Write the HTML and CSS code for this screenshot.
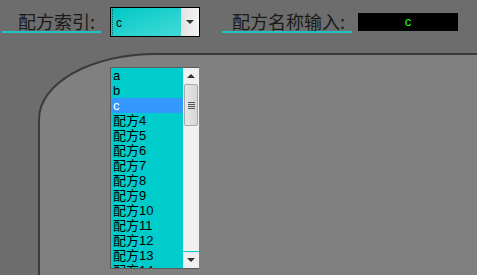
FILE: index.html
```html
<!DOCTYPE html>
<html lang="zh">
<head>
  <meta charset="UTF-8" />
  <title>配方</title>
  <link rel="stylesheet" href="styles.css">
</head>
<body>

  <div class="topbar">
    <div class="field-label label-index">配方索引:</div>
    <div class="combo">
      <span class="combo-value">c</span>
      <span class="combo-btn"><span class="tri"></span></span>
    </div>
    <div class="field-label label-name">配方名称输入:</div>
    <div class="name-box">c</div>
  </div>

  <div class="panel"></div>

  <div class="dropdown">
    <ul class="options">
      <li>a</li>
      <li>b</li>
      <li class="selected">c</li>
      <li>配方4</li>
      <li>配方5</li>
      <li>配方6</li>
      <li>配方7</li>
      <li>配方8</li>
      <li>配方9</li>
      <li>配方10</li>
      <li>配方11</li>
      <li>配方12</li>
      <li>配方13</li>
      <li>配方14</li>
    </ul>
    <div class="scrollbar">
      <div class="arrow up"><span class="tri-up"></span></div>
      <div class="thumb"><span class="grip"></span></div>
      <div class="track"></div>
      <div class="arrow down"><span class="tri"></span></div>
    </div>
  </div>

</body>
</html>
```

FILE: styles.css
```css
body {
  margin: 0;
  width: 477px;
  height: 275px;
  overflow: hidden;
  background: #6d6d6d;
  font-family: 'Liberation Sans', 'Noto Sans CJK SC', sans-serif;
  position: relative;
}

.topbar {
  height: 53px;
  display: flex;
  align-items: flex-start;
}

.field-label {
  margin-top: 12px;
  height: 19px;
  line-height: 19px;
  font-family: 'Noto Sans CJK SC', sans-serif;
  font-size: 18px;
  color: #1a1a1a;
  border-bottom: 2px solid #1cc4c4;
  white-space: nowrap;
}

.label-index {
  margin-left: 2px;
  width: 83px;
  padding-left: 16px;
}

.label-name {
  margin-left: 22px;
  width: 120px;
  padding-left: 10px;
}

.combo {
  margin-left: 9px;
  margin-top: 7px;
  width: 88px;
  height: 28px;
  border: 1px solid #000;
  background: linear-gradient(160deg, #00c8c6, #4cdcd8);
  display: flex;
  align-items: center;
}

.combo-value {
  flex: 1;
  padding-left: 3px;
  font-size: 12px;
  color: #000;
  border-left: 1px dotted #106060;
  height: 26px;
  line-height: 28px;
  margin-left: 1px;
}

.combo-btn {
  width: 18px;
  height: 28px;
  background: linear-gradient(90deg, #e2e2e2, #f4f4f4);
  display: flex;
  align-items: center;
  justify-content: center;
}

.tri {
  width: 0;
  height: 0;
  border-left: 4px solid transparent;
  border-right: 4px solid transparent;
  border-top: 4px solid #333;
}

.tri-up {
  width: 0;
  height: 0;
  border-left: 4px solid transparent;
  border-right: 4px solid transparent;
  border-bottom: 4px solid #333;
}

.name-box {
  margin-left: 6px;
  margin-top: 13px;
  width: 100px;
  height: 18px;
  line-height: 18px;
  background: #000;
  color: #22ff22;
  text-align: center;
  font-size: 13px;
}

.panel {
  margin-left: 38px;
  height: 230px;
  background: #808080;
  border-top: 2px solid #3a3a3a;
  border-left: 2px solid #3a3a3a;
  border-top-left-radius: 118px 66px;
}

/* open list of the combo, drawn over the panel */
.dropdown {
  position: absolute;
  left: 110px;
  top: 67px;
  width: 88px;
  height: 200px;
  border: 1px solid #5a5a5a;
  border-right: none;
  display: flex;
  overflow: hidden;
}

.options {
  list-style: none;
  margin: 0;
  padding: 0;
  width: 72px;
  background: #00cccc;
}

.options li {
  height: 15px;
  line-height: 15px;
  padding-left: 2px;
  font-size: 13px;
  color: #000;
  white-space: nowrap;
}

.options li.selected {
  background: #3399ff;
  color: #fff;
}

.scrollbar {
  width: 16px;
  background: #f0f0f0;
  display: flex;
  flex-direction: column;
}

.arrow {
  height: 16px;
  display: flex;
  align-items: center;
  justify-content: center;
}

.arrow.down {
  border-top: 1px solid #1cc4c4;
}

.thumb {
  height: 40px;
  margin: 0 1px;
  border: 1px solid #a8a8a8;
  border-radius: 2px;
  background: linear-gradient(90deg, #e8e8e8, #d6d6d6);
  display: flex;
  align-items: center;
  justify-content: center;
}

.grip {
  width: 7px;
  height: 7px;
  background: repeating-linear-gradient(180deg, #555 0 1px, transparent 1px 2px);
}

.track {
  flex: 1;
}
```
